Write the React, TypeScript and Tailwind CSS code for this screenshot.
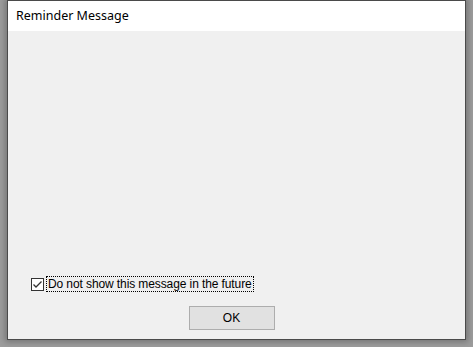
import React from "react";

export default function App() {
  return (
    <div className="w-[473px] h-[347px] bg-[#9c9c9c] pl-[7px] pr-[7px] pb-[7px] overflow-hidden">
      <div className="w-[459px] h-[340px] border border-[#4a4a4a] bg-[#f0f0f0] flex flex-col shadow-[0_0_6px_2px_rgba(0,0,0,0.25)]">
        <div className="h-[30px] bg-white flex items-center pl-[8px] pt-[1px] text-[12.5px] text-black" style={{ fontFamily: '"Noto Sans", sans-serif' }}>
          Reminder Message
        </div>
        <div className="flex-1 flex flex-col" style={{ fontFamily: '"Liberation Sans", Arial, sans-serif' }}>
          <div className="flex-1" />
          <div className="flex items-center pl-[23px] h-[16px]">
            <div className="w-[13px] h-[13px] border border-[#333] bg-white flex items-center justify-center">
              <svg width="11" height="11" viewBox="0 0 11 11">
                <path d="M1.5 5.5 L4 8 L9.5 2.5" fill="none" stroke="#333" strokeWidth="1.3" />
              </svg>
            </div>
            <div className="ml-[2px] h-[16px] px-[1px] flex items-center border border-dotted border-black text-[12px] text-black leading-none tracking-[-0.1px]">
              Do not show this message in the future
            </div>
          </div>
          <div className="flex justify-center mt-[14px] mb-[9px]">
            <button className="w-[86px] h-[24px] bg-[#e1e1e1] border border-[#adadad] text-[12px] text-black mr-[10px]">
              OK
            </button>
          </div>
        </div>
      </div>
    </div>
  );
}
